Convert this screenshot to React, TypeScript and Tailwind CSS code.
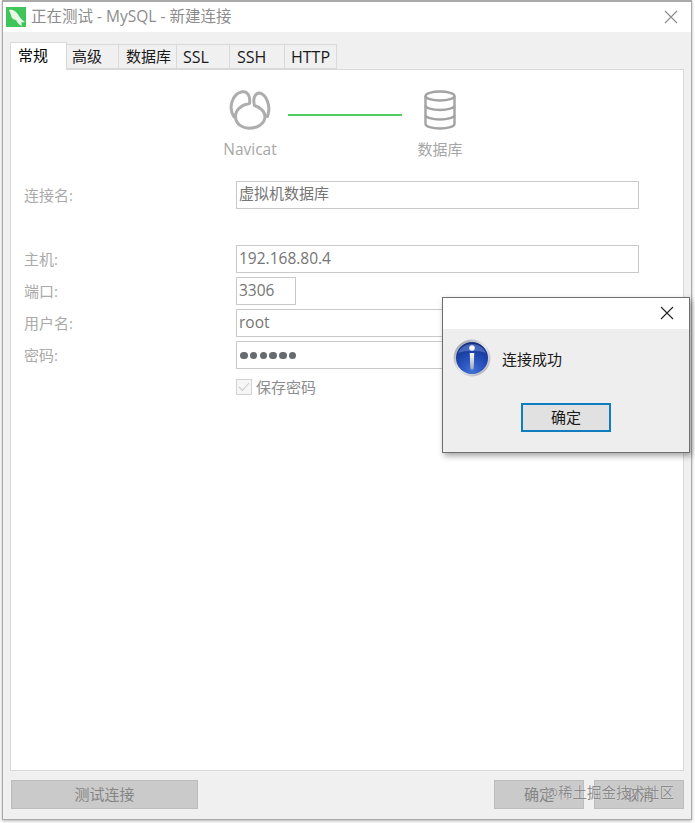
const FONT = "font-['Open_Sans','Noto_Sans_CJK_SC',sans-serif]"

const tabs = [
  { label: '高级', w: 'w-[52px]', cls: 'pl-[5px] text-[15px]' },
  { label: '数据库', w: 'w-[58px]', cls: 'pl-[7px] text-[15px]' },
  { label: 'SSL', w: 'w-[53px]', cls: 'pl-[6px] text-[16px]' },
  { label: 'SSH', w: 'w-[55px]', cls: 'pl-[7px] text-[16px]' },
  { label: 'HTTP', w: 'w-[52px]', cls: 'pl-[6px] text-[16px]' },
]

function CloseIcon({ color }: { color: string }) {
  return (
    <svg width="14" height="14" viewBox="0 0 14 14" fill="none" stroke={color} strokeWidth="1.1">
      <path d="M1 1l12 12M13 1L1 13" />
    </svg>
  )
}

function AppLogo() {
  return (
    <div className="w-5 h-5 bg-[#3fc55a] flex items-center justify-center">
      <svg width="20" height="20" viewBox="0 0 20 20" fill="#e9f7e6">
        <path d="M3 3C7 2 11 5 13 9c1.500 2.500 3.500 4.500 6 6l-3.800.4.800 3.600c-3-1-5-4-6-6-3 0-5-3-5-5L3 3z" />
      </svg>
    </div>
  )
}

function NavicatLogo() {
  return (
    <svg width="42" height="40" viewBox="0 0 42 40" fill="none" stroke="#adadad" strokeWidth="3" strokeLinejoin="round" strokeLinecap="round">
      <path d="M5 27C-1 18 3 4 13 1.800c6-1 8.500 5 7.500 11.700C12 15 6.500 20 6.500 26.500c0 8 7.500 11.700 14 11.700 8 0 15.500-4.700 15.500-12 0-5-5.500-9-10.500-10.700-2-7 .5-12.500 5-12.500 6 1 12 12 8 23.500" />
    </svg>
  )
}

function DatabaseIcon() {
  return (
    <svg width="32" height="40" viewBox="0 0 32 40" fill="none" stroke="#a3a3a3" strokeWidth="2.400">
      <ellipse cx="16" cy="6" rx="14.500" ry="4.500" />
      <path d="M1.500 6v28c0 2.500 6.500 4.500 14.500 4.500s14.500-2 14.500-4.500V6" />
      <path d="M1.500 15.500c0 2.500 6.500 4.500 14.500 4.500s14.500-2 14.500-4.500" />
      <path d="M1.500 25c0 2.500 6.500 4.500 14.500 4.500s14.500-2 14.500-4.500" />
    </svg>
  )
}

function InfoIcon() {
  return (
    <svg width="38" height="38" viewBox="0 0 38 38">
      <defs>
        <linearGradient id="ring" x1="0" y1="0" x2="1" y2="1">
          <stop offset="0" stopColor="#8e939c" />
          <stop offset="0.5" stopColor="#e6e8ec" />
          <stop offset="1" stopColor="#a4a7ad" />
        </linearGradient>
        <radialGradient id="ball" cx="0.5" cy="0.9" r="0.9">
          <stop offset="0" stopColor="#3f6fd8" />
          <stop offset="0.6" stopColor="#1f45ae" />
          <stop offset="1" stopColor="#142d80" />
        </radialGradient>
        <linearGradient id="bar" x1="0" y1="0" x2="0" y2="1">
          <stop offset="0" stopColor="#ffffff" />
          <stop offset="1" stopColor="#9aa3b8" />
        </linearGradient>
      </defs>
      <circle cx="19" cy="19" r="18.500" fill="url(#ring)" />
      <circle cx="19" cy="19" r="16" fill="url(#ball)" />
      <path d="M5 14c3-6 8-9 14-9s11 3 14 9c-8-3-20-3-28 0z" fill="#7fa0e6" opacity="0.45" />
      <circle cx="19" cy="9" r="2.800" fill="#f4f6fb" />
      <path d="M16.800 14h4.400l-.4 15a1.800 1.800 0 0 1-3.600 0z" fill="url(#bar)" />
    </svg>
  )
}

function Field({ label, value, short, dots, cjk }: { label: string; value: string; short?: boolean; dots?: boolean; cjk?: boolean }) {
  return (
    <div className="flex items-center h-[28px]">
      <span className="w-[225px] pl-[13px] text-[15px] text-[#aaaaaa]">{label}</span>
      <div
        className={`${short ? 'w-[60px]' : 'w-[403px]'} ${cjk ? 'text-[15px] pb-[3px]' : 'text-[15.500px]'} h-[28px] border border-[#c9c9c9] bg-white px-[2px] flex items-center text-[#757575]`}
      >
        {dots ? (
          <span className="flex gap-[2.300px] pl-[1px] pt-[1px]">
            {[0, 1, 2, 3, 4, 5].map((i) => (
              <span key={i} className="w-[7.500px] h-[7.500px] rounded-full bg-[#666b70]" />
            ))}
          </span>
        ) : (
          value
        )}
      </div>
    </div>
  )
}

function FooterButton({ label, w }: { label: string; w: string }) {
  return (
    <div className={`${w} h-[29px] bg-[#cacaca] border border-[#bcbcbc] flex items-center justify-center text-[15px] text-[#858585]`}>
      {label}
    </div>
  )
}

export default function App() {
  return (
    <div className={`${FONT} relative w-[695px] h-[823px] bg-white overflow-hidden`}>
      <div className="ml-[2px] w-[690px] h-[820px] border border-t-2 border-[#a9a9a9] bg-[#f0f0f0] flex flex-col shadow-[0_1px_3px_rgba(0,0,0,0.3)]">
        {/* title bar */}
        <div className="h-[30px] shrink-0 bg-white flex items-center pl-[3px] pr-[13px]">
          <AppLogo />
          <span className="ml-[5px] text-[15.500px] text-[#8c8c8c]">正在测试 - MySQL - 新建连接</span>
          <span className="ml-auto">
            <CloseIcon color="#8a8a8a" />
          </span>
        </div>

        {/* tabs */}
        <div className="flex items-end h-[37px] pl-[7px] shrink-0">
          <div className="w-[57px] h-[28px] bg-white border border-b-0 border-[#d9d9d9] pl-[7px] text-[15px] leading-[24px] text-black relative z-10 -mb-[1px]">
            常规
          </div>
          {tabs.map((t) => (
            <div
              key={t.label}
              className={`${t.w} ${t.cls} h-[25px] bg-[#f0f0f0] border border-l-0 border-[#d9d9d9] flex items-center text-[#1a1a1a]`}
            >
              {t.label}
            </div>
          ))}
        </div>

        {/* panel */}
        <div className="mx-[7px] h-[702px] shrink-0 bg-white border border-[#d9d9d9]">
          <div className="flex pl-[201px] pt-[20px]">
            <div className="w-[76px] flex flex-col items-center">
              <NavicatLogo />
              <span className="mt-[8px] text-[15.500px] leading-[22px] text-[#a6a6a6]">Navicat</span>
            </div>
            <div className="w-[114px] h-[2px] mt-[24px] bg-[#4fcf5b]" />
            <div className="w-[76px] flex flex-col items-center">
              <DatabaseIcon />
              <span className="mt-[8px] text-[15px] leading-[22px] text-[#a6a6a6]">数据库</span>
            </div>
          </div>

          <div className="mt-[21px]">
            <Field label="连接名:" value="虚拟机数据库" cjk />
          </div>
          <div className="mt-[36px] flex flex-col gap-[4px]">
            <Field label="主机:" value="192.168.80.4" />
            <Field label="端口:" value="3306" short />
            <Field label="用户名:" value="root" />
            <Field label="密码:" value="" dots />
          </div>
          <div className="mt-[9px] ml-[225px] flex items-center gap-[4px] h-[18px]">
            <span className="w-[16px] h-[16px] border border-[#d2d2d2] bg-[#f6f6f6] flex items-center justify-center">
              <svg width="12" height="10" viewBox="0 0 12 10" fill="none" stroke="#cccccc" strokeWidth="1.100">
                <path d="M1 5l3.500 3.500L11 1" />
              </svg>
            </span>
            <span className="text-[15px] text-[#8d8d8d]">保存密码</span>
          </div>
        </div>

        {/* footer */}
        <div className="flex mt-[9px] pl-[8px] pr-[7px]">
          <FooterButton label="测试连接" w="w-[187px]" />
          <div className="ml-auto flex gap-[10px]">
            <FooterButton label="确定" w="w-[90px]" />
            <FooterButton label="取消" w="w-[90px]" />
          </div>
        </div>
      </div>

      {/* message box */}
      <div className="absolute left-[442px] top-[297px] w-[248px] h-[156px] border border-[#6e6e6e] bg-[#eeeeee] flex flex-col shadow-[2px_3px_6px_rgba(0,0,0,0.35)]">
        <div className="h-[31px] bg-white flex items-center justify-end pr-[15px] pb-[1px] shrink-0">
          <CloseIcon color="#222222" />
        </div>
        <div className="flex items-center pl-[10px] pt-[10px]">
          <InfoIcon />
          <span className="ml-[11px] mt-[3px] text-[15px] text-[#1a1a1a]">连接成功</span>
        </div>
        <div className="flex justify-center mt-[26px]">
          <div className="w-[90px] h-[29px] border-2 border-[#0f7dc0] bg-[#e1e1e1] flex items-center justify-center text-[15px] text-[#1a1a1a]">
            确定
          </div>
        </div>
      </div>

      {/* watermark */}
      <div className="absolute left-[545px] top-[783px] text-[14.500px] leading-[20px] text-[#8a8a8a] [text-shadow:0_0_1px_#ffffff]">
        @稀土掘金技术社区
      </div>
    </div>
  )
}
